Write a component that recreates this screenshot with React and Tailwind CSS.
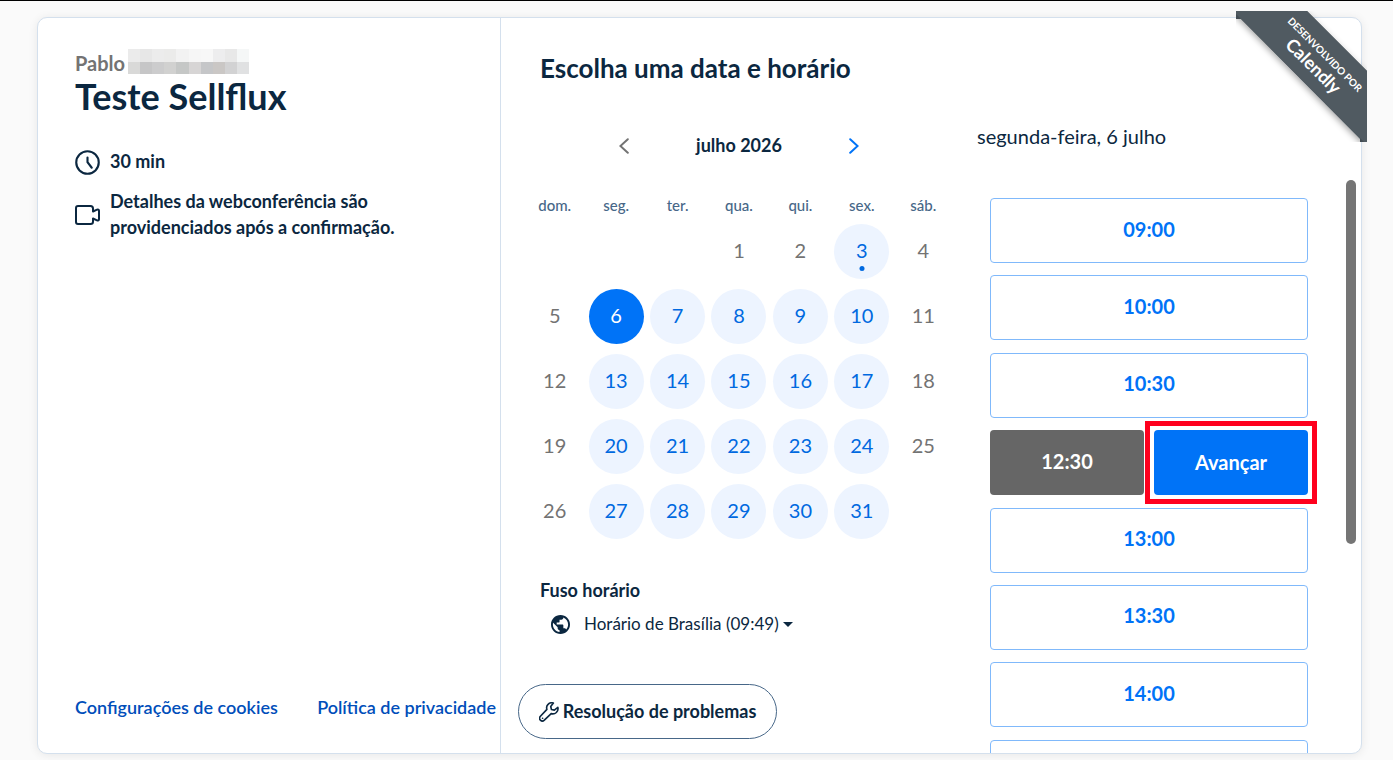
import React from "react";

const weekdays = ["dom.", "seg.", "ter.", "qua.", "qui.", "sex.", "sáb."];

const weeks = [
  [null, null, null, 1, 2, 3, 4],
  [5, 6, 7, 8, 9, 10, 11],
  [12, 13, 14, 15, 16, 17, 18],
  [19, 20, 21, 22, 23, 24, 25],
  [26, 27, 28, 29, 30, 31, null],
];

const today = 3;
const selectedDay = 6;

const slots = ["09:00", "10:00", "10:30", "12:30", "13:00", "13:30", "14:00", "14:30"];
const selectedSlot = "12:30";

const isAvailable = (day, column) => day >= 3 && column > 0 && column < 6;

function ClockIcon() {
  return (
    <svg viewBox="0 0 10 10" className="size-[25px] shrink-0" fill="none" stroke="currentColor" strokeWidth="0.85" strokeLinecap="round" aria-hidden="true">
      <circle cx="5" cy="5" r="4.5" />
      <path d="M5 3v1.9L6.700 7.100" />
    </svg>
  );
}

function VideoIcon() {
  return (
    <svg viewBox="0 0 25 20" className="mt-0.5 h-5 w-[25px] shrink-0" fill="none" stroke="currentColor" strokeWidth="2" strokeLinejoin="round" strokeLinecap="round" aria-hidden="true">
      <path d="M3 1h12.500c1.500 0 2.500 1 2.500 2.500V6.500l4-1.800c1-.4 2 .1 2 1v8.600c0 1-1 1.400-2 1l-4-1.800v3.200c0 1.500-1 2.300-2.500 2.300H3c-1.200 0-2-.9-2-2V3c0-1.100.8-2 2-2z" />
    </svg>
  );
}

function Chevron({ flip }) {
  return (
    <svg viewBox="0 0 10 16" className="h-4 w-[10px]" fill="none" stroke="currentColor" strokeWidth="2" strokeLinecap="round" strokeLinejoin="miter" aria-hidden="true">
      <path d={flip ? "M1.200 1.200 8.600 8l-7.400 6.800" : "M8.800 1.200 1.400 8l7.400 6.800"} />
    </svg>
  );
}

function GlobeIcon() {
  return (
    <svg viewBox="2 2 20 20" className="size-[19px] shrink-0" fill="currentColor" aria-hidden="true">
      <path d="M12 2C6.480 2 2 6.480 2 12s4.480 10 10 10 10-4.480 10-10S17.520 2 12 2zm-1 17.930c-3.950-.49-7-3.850-7-7.930 0-.62.080-1.210.21-1.790L9 15v1c0 1.100.9 2 2 2v1.930zm6.900-2.540c-.26-.81-1-1.390-1.900-1.390h-1v-3c0-.55-.45-1-1-1H8v-2h2c.55 0 1-.45 1-1V7h2c1.100 0 2-.9 2-2v-.41c2.930 1.190 5 4.060 5 7.410 0 2.080-.8 3.970-2.100 5.390z" />
    </svg>
  );
}

function WrenchIcon() {
  return (
    <svg viewBox="1.500 1.500 21 21" className="size-5 shrink-0" fill="none" stroke="currentColor" strokeWidth="1.700" strokeLinejoin="round" strokeLinecap="round" aria-hidden="true">
      <path d="M16.600 2.600c-2-.6-4.200-.1-5.600 1.400-1.400 1.400-1.800 3.400-1.200 5.200l-6.800 7.300c-1.100 1.200-1.100 3 0 4.100s2.900 1.100 4.100 0l7.200-6.900c1.900.6 3.900.2 5.400-1.200 1.500-1.500 2.100-3.500 1.600-5.400l-3.700 2.900-3-.7-.8-3z" />
      <path d="M5.200 18.600h.1" />
    </svg>
  );
}

function RedactedName() {
  const shades = [
    "bg-[#ebebeb]", "bg-[#e7e7e7]", "bg-[#ececec]", "bg-[#ebebea]", "bg-[#f2f2f2]",
    "bg-[#f6f6f6]", "bg-[#f7f7f7]", "bg-[#ededee]", "bg-[#e8e8e8]", "bg-[#f5f7f7]",
    "bg-[#d9d9d8]", "bg-[#c6c6c7]", "bg-[#cccccd]", "bg-[#d1d1d0]", "bg-[#c5c7c6]",
    "bg-[#d7d5d5]", "bg-[#c5c6c8]", "bg-[#cac7c5]", "bg-[#d2d2d3]", "bg-[#e0e1e2]",
  ];
  return (
    <span className="grid h-[25px] w-[121px] grid-cols-10 grid-rows-2" aria-hidden="true">
      {shades.map((shade, i) => <span key={i} className={shade} />)}
    </span>
  );
}

function Ribbon() {
  return (
    <a href="#calendly" className="absolute -top-[7px] -right-[6px] block size-[131px] text-white">
      <svg viewBox="0 0 131 131" className="size-full overflow-visible" aria-hidden="true">
        <defs>
          <filter id="ribbon-shadow" x="-10%" y="-10%" width="120%" height="120%">
            <feDropShadow dx="-1" dy="2" stdDeviation="3" floodOpacity="0.35" />
          </filter>
          <clipPath id="ribbon-clip"><path d="M0 0h131v131h-7L0 131z" /></clipPath>
        </defs>
        <g clipPath="url(#ribbon-clip)">
          <path d="M0 0h71l60 60v71h-4L0 3z" fill="#505a61" filter="url(#ribbon-shadow)" />
        </g>
        <path d="M0 0h6v8H0zM124 124h7v7h-7z" fill="#434c53" />
        <path d="M0 0h71l60 60v71h-3L0 3z" fill="#505a61" />
      </svg>
      <span className="absolute top-0 left-0 flex size-full rotate-45 flex-col items-center justify-center pb-[46px] pl-0.5 leading-none font-bold whitespace-nowrap">
        <span className="text-[10px] leading-3">DESENVOLVIDO POR</span>
        <span className="text-lg leading-5">Calendly</span>
      </span>
    </a>
  );
}

function DayCell({ day, column }) {
  if (!day) return null;
  if (!isAvailable(day, column)) {
    return <span className="flex size-[55px] items-center justify-center pb-1 text-[#737373]">{day}</span>;
  }
  const tone = day === selectedDay ? "bg-[#0073f7] text-white" : "bg-[#edf4ff] text-[#0069e0]";
  return (
    <button type="button" aria-pressed={day === selectedDay} className={`relative flex size-[55px] items-center justify-center rounded-full pb-1 ${tone}`}>
      {day}
      {day === today && <span className="absolute bottom-2 left-1/2 size-[5px] -translate-x-1/2 rounded-full bg-current" />}
    </button>
  );
}

function Slot({ time }) {
  if (time === selectedSlot) {
    return (
      <li className="flex h-[65px] gap-[10px] text-xl font-bold text-white">
        <button type="button" className="flex-1 rounded-[4px] bg-[#666666] pb-1">{time}</button>
        <button type="button" className="relative flex-1 rounded-[4px] bg-[#0073f7] pb-0.5">
          Avançar
          <span className="pointer-events-none absolute -inset-[9px] border-5 border-[#ff001e]" />
        </button>
      </li>
    );
  }
  return (
    <li className="h-[65px]">
      <button type="button" className="size-full rounded-[4px] border border-[#80b9fb] pb-1 text-xl font-bold text-[#0073f7]">{time}</button>
    </li>
  );
}

export default function App() {
  return (
    <div className="flex h-screen flex-col border-t border-black bg-[#fafafa] pt-4 pr-[31px] pb-[6px] pl-[37px] font-['Lato',sans-serif] text-[#0b2740]">
      <main className="relative flex min-h-0 flex-1 rounded-[10px] border border-[#d4e0ed] bg-white shadow-[0_1px_10px_rgba(0,0,0,0.08)]">
        <section className="flex w-[463px] shrink-0 flex-col border-r border-[#d4e0ed] pt-[31px] pl-[37px]">
          <div className="flex h-[26px] gap-[3px] text-xl font-bold text-[#737373]">
            <span className="leading-7">Pablo</span>
            <RedactedName />
          </div>
          <h1 className="text-[36px] leading-[42px] font-bold">Teste Sellflux</h1>
          <div className="mt-8 flex h-[26px] items-center gap-[10px] text-lg font-bold">
            <ClockIcon />
            <span className="pb-0.5">30 min</span>
          </div>
          <div className="mt-[13px] flex items-center gap-[10px] text-lg leading-[26px] font-bold">
            <VideoIcon />
            <p>Detalhes da webconferência são<br />providenciados após a confirmação.</p>
          </div>
          <footer className="mt-auto mb-[34px] flex h-6 items-center justify-between pr-1 text-lg font-semibold text-[#004eba]">
            <button type="button">Configurações de cookies</button>
            <a href="#privacidade">Política de privacidade</a>
          </footer>
        </section>

        <section className="flex w-[453px] shrink-0 flex-col pt-8 pl-[23px]">
          <h2 className="pl-4 text-[26px] leading-9 font-bold">Escolha uma data e horário</h2>
          <div className="mt-12 flex h-6 items-center justify-between px-[95px] text-lg font-bold">
            <button type="button" aria-label="Mês anterior" className="text-[#737373]"><Chevron /></button>
            <span className="pb-0.5">julho 2026</span>
            <button type="button" aria-label="Próximo mês" className="text-[#0073f7]"><Chevron flip /></button>
          </div>
          <table className="mt-9 w-full table-fixed text-xl">
            <thead>
              <tr className="h-[25px] text-[15px] text-[#476788]">
                {weekdays.map((name) => <th key={name} className="p-0 pb-0.5 font-medium">{name}</th>)}
              </tr>
            </thead>
            <tbody>
              {weeks.map((week, row) => (
                <tr key={row} className="h-[65px]">
                  {week.map((day, column) => (
                    <td key={column} className="p-0 align-middle">
                      <div className="flex justify-center"><DayCell day={day} column={column} /></div>
                    </td>
                  ))}
                </tr>
              ))}
            </tbody>
          </table>
          <label htmlFor="timezone" className="mt-[34px] pl-4 text-lg leading-6 font-bold">Fuso horário</label>
          <div className="mt-[10px] flex h-6 items-center pl-[27px]">
            <GlobeIcon />
            <select id="timezone" className="ml-[14px] appearance-none bg-transparent text-[17px]">
              <option>Horário de Brasília (09:49)</option>
            </select>
            <svg viewBox="0 0 10 5" className="ml-1 h-[5px] w-[10px]" fill="currentColor" aria-hidden="true"><path d="M0 0h10L5 5z" /></svg>
          </div>
          <button type="button" className="mt-auto mb-[14px] -ml-[6px] flex h-[55px] w-[259px] shrink-0 items-center justify-center gap-1 rounded-full border border-[#476788] text-lg font-bold">
            <WrenchIcon />
            <span className="pb-0.5">Resolução de problemas</span>
          </button>
        </section>

        <section className="flex min-w-0 flex-1 flex-col pl-[23px]">
          <h3 className="mt-[106px] text-xl leading-6">segunda-feira, 6 julho</h3>
          <div className="mt-8 flex min-h-0 flex-1 overflow-hidden pr-[5px]">
            <ul className="mt-[18px] grid h-[619px] flex-1 grid-rows-8 pr-[38px] pl-[13px]">
              {slots.map((time) => <Slot key={time} time={time} />)}
            </ul>
            <div className="h-[364px] w-[10px] rounded-full bg-[#757575]" />
          </div>
        </section>

        <Ribbon />
      </main>
    </div>
  );
}
